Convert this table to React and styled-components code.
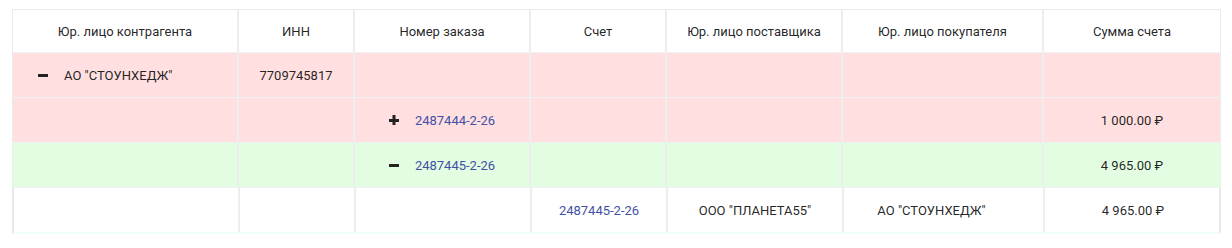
import styled, { createGlobalStyle } from 'styled-components';

const GlobalStyle = createGlobalStyle`
  body {
    margin: 0;
    background: #fff;
    font-family: Roboto, "Noto Sans", sans-serif;
    font-size: 13px;
    color: rgba(0, 0, 0, 0.87);
  }
`;

const COLUMNS = '226px 116px 176px 136px 176px 201px 176px';

const Wrapper = styled.div`
  padding: 9px 13px 0 12px;
`;

const Table = styled.div`
  width: 1207px;
  border-left: 1px solid #ececec;
  border-top: 1px solid #ececec;
  border-right: 1px solid #ececec;
`;

const Row = styled.div`
  box-sizing: border-box;
  display: grid;
  grid-template-columns: ${COLUMNS};
  height: ${(p) => p.height || 45}px;
  background: ${(p) => p.bg || '#fff'};
  border-bottom: ${(p) => (p.divider ? '1px solid #edf2f2' : 'none')};
`;

const DetailRow = styled(Row)`
  border-left: 2px solid #e8e8e8;
  border-right: 2px solid #e8e8e8;
  border-bottom: 2px solid #eefefd;
  margin-left: -1px;
  margin-right: -1px;
`;

const Cell = styled.div`
  display: flex;
  align-items: center;
  justify-content: ${(p) => (p.left ? 'flex-start' : 'center')};
  padding-left: ${(p) => p.pl || 0}px;
  padding-right: ${(p) => p.pr || 0}px;
  border-right: 2px solid #eeeeee;
  &:last-child {
    border-right: none;
  }
`;

const HeadCell = styled(Cell)`
  font-size: 13px;
`;

const Toggle = styled.span`
  display: inline-flex;
  width: 10px;
  margin-right: 16px;
  svg {
    display: block;
  }
`;

const Link = styled.a`
  color: #3f51a5;
  text-decoration: none;
`;

const Minus = () => (
  <svg width="10" height="10" viewBox="0 0 10 10">
    <rect x="0" y="4" width="10" height="3" fill="#222" />
  </svg>
);

const Plus = () => (
  <svg width="10" height="10" viewBox="0 0 10 10">
    <rect x="0" y="4" width="10" height="3" fill="#222" />
    <rect x="3.5" y="0" width="3" height="10" fill="#222" />
  </svg>
);

const headers = [
  'Юр. лицо контрагента',
  'ИНН',
  'Номер заказа',
  'Счет',
  'Юр. лицо поставщика',
  'Юр. лицо покупателя',
  'Сумма счета',
];

const PINK = '#ffdfdf';
const GREEN = '#e3fde2';

export default function App() {
  return (
    <>
      <GlobalStyle />
      <Wrapper>
        <Table>
          <Row height={43} divider>
            {headers.map((h) => (
              <HeadCell key={h}>{h}</HeadCell>
            ))}
          </Row>

          <Row bg={PINK} divider>
            <Cell left pl={25}>
              <Toggle><Minus /></Toggle>
              АО "СТОУНХЕДЖ"
            </Cell>
            <Cell>7709745817</Cell>
            <Cell />
            <Cell />
            <Cell />
            <Cell />
            <Cell />
          </Row>

          <Row bg={PINK} divider>
            <Cell />
            <Cell />
            <Cell>
              <Toggle><Plus /></Toggle>
              <Link>2487444-2-26</Link>
            </Cell>
            <Cell />
            <Cell />
            <Cell />
            <Cell>1 000.00 ₽</Cell>
          </Row>

          <Row bg={GREEN} divider>
            <Cell />
            <Cell />
            <Cell>
              <Toggle><Minus /></Toggle>
              <Link>2487445-2-26</Link>
            </Cell>
            <Cell />
            <Cell />
            <Cell />
            <Cell>4 965.00 ₽</Cell>
          </Row>

          <DetailRow height={46}>
            <Cell />
            <Cell />
            <Cell />
            <Cell><Link>2487445-2-26</Link></Cell>
            <Cell>ООО "ПЛАНЕТА55"</Cell>
            <Cell pr={24}>АО "СТОУНХЕДЖ"</Cell>
            <Cell>4 965.00 ₽</Cell>
          </DetailRow>
        </Table>
      </Wrapper>
    </>
  );
}
